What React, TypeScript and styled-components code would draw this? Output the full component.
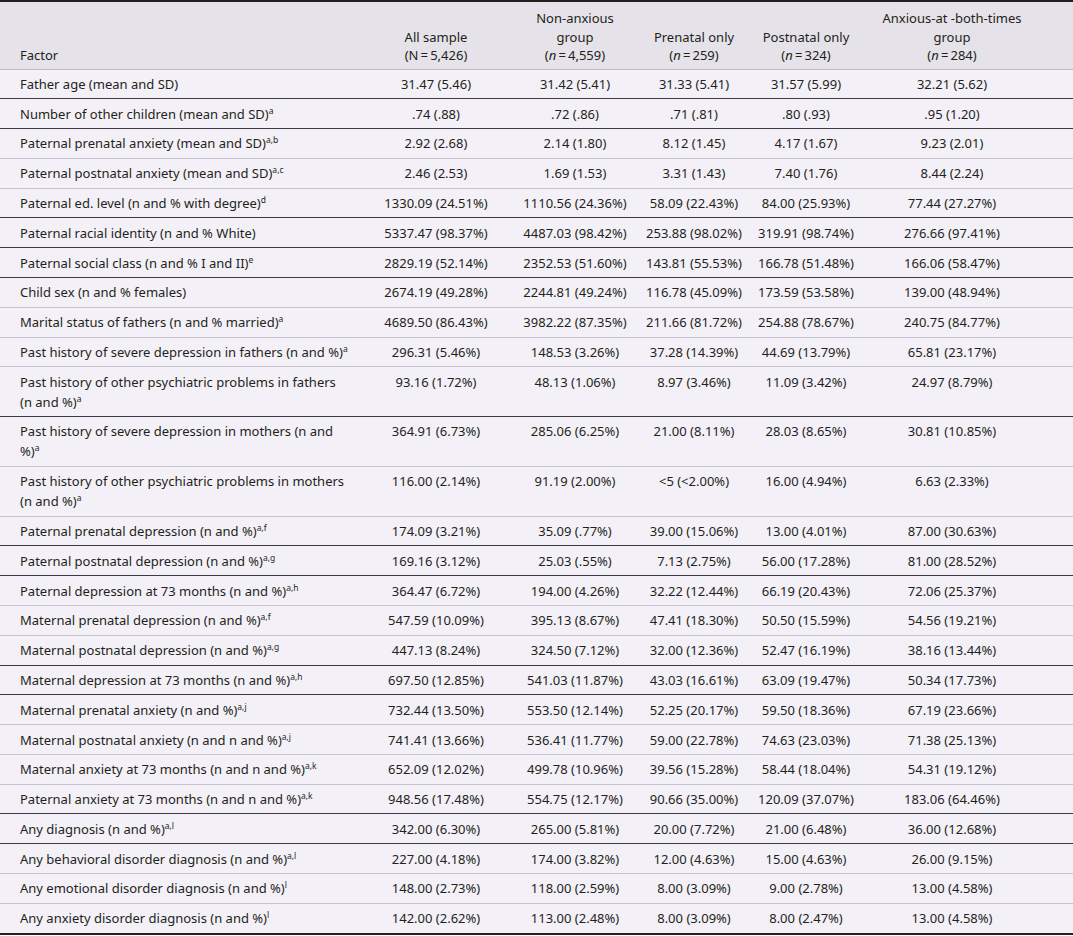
import { Fragment } from "react";
import styled, { createGlobalStyle } from "styled-components";

const Global = createGlobalStyle`
  html, body {
    margin: 0;
    padding: 0;
    background: #ffffff;
  }
`;

const Table = styled.table`
  width: 1073px;
  border-collapse: collapse;
  table-layout: fixed;
  font-family: "Noto Sans", "Open Sans", sans-serif;
  font-size: 13px;
  color: #231f20;
  border-top: 2px solid #231f20;
  border-bottom: 2px solid #231f20;
`;

const Head = styled.thead`
  background: #e5e3e9;
`;

const HeadCell = styled.th<{ $left?: boolean }>`
  font-weight: 400;
  line-height: 18.5px;
  padding: 7px 0 4px;
  vertical-align: bottom;
  text-align: ${(p) => (p.$left ? "left" : "center")};
  border-bottom: 1px solid #bdbbc1;
  white-space: nowrap;
`;

const Body = styled.tbody`
  background: #f3f1f7;
`;

const Row = styled.tr<{ $dark?: boolean }>`
  border-bottom: 1px solid ${(p) => (p.$dark ? "#3d3b40" : "#c6c4ca")};
`;

const Cell = styled.td`
  line-height: 20px;
  padding: 4.4px 0;
  vertical-align: top;
  text-align: center;
  white-space: nowrap;
`;

const FactorCell = styled(Cell)`
  text-align: left;
`;

const Sup = styled.sup`
  font-size: 8.5px;
  line-height: 0;
  vertical-align: 5px;
`;

const Em = styled.i`
  font-style: italic;
`;

/* column widths and side paddings tuned so each column's text sits where it does in the print */
const cols = [
  { w: 378, pl: 20, pr: 6 },
  { w: 128, pl: 0, pr: 12 },
  { w: 130, pl: 8, pr: 0 },
  { w: 116, pl: 0, pr: 0 },
  { w: 118, pl: 0, pr: 10 },
  { w: 203, pl: 0, pr: 39 },
];

const Col = styled.col<{ $w: number }>`
  width: ${(p) => p.$w}px;
`;

type RowData = {
  label: string;
  sup?: string;
  values: string[];
  dark?: boolean;
};

const rows: RowData[] = [
  { label: "Father age (mean and SD)", values: ["31.47 (5.46)", "31.42 (5.41)", "31.33 (5.41)", "31.57 (5.99)", "32.21 (5.62)"], dark: true },
  { label: "Number of other children (mean and SD)", sup: "a", values: [".74 (.88)", ".72 (.86)", ".71 (.81)", ".80 (.93)", ".95 (1.20)"], dark: true },
  { label: "Paternal prenatal anxiety (mean and SD)", sup: "a,b", values: ["2.92 (2.68)", "2.14 (1.80)", "8.12 (1.45)", "4.17 (1.67)", "9.23 (2.01)"] },
  { label: "Paternal postnatal anxiety (mean and SD)", sup: "a,c", values: ["2.46 (2.53)", "1.69 (1.53)", "3.31 (1.43)", "7.40 (1.76)", "8.44 (2.24)"] },
  { label: "Paternal ed. level (n and % with degree)", sup: "d", values: ["1330.09 (24.51%)", "1110.56 (24.36%)", "58.09 (22.43%)", "84.00 (25.93%)", "77.44 (27.27%)"], dark: true },
  { label: "Paternal racial identity (n and % White)", values: ["5337.47 (98.37%)", "4487.03 (98.42%)", "253.88 (98.02%)", "319.91 (98.74%)", "276.66 (97.41%)"], dark: true },
  { label: "Paternal social class (n and % I and II)", sup: "e", values: ["2829.19 (52.14%)", "2352.53 (51.60%)", "143.81 (55.53%)", "166.78 (51.48%)", "166.06 (58.47%)"], dark: true },
  { label: "Child sex (n and % females)", values: ["2674.19 (49.28%)", "2244.81 (49.24%)", "116.78 (45.09%)", "173.59 (53.58%)", "139.00 (48.94%)"] },
  { label: "Marital status of fathers (n and % married)", sup: "a", values: ["4689.50 (86.43%)", "3982.22 (87.35%)", "211.66 (81.72%)", "254.88 (78.67%)", "240.75 (84.77%)"] },
  { label: "Past history of severe depression in fathers (n and %)", sup: "a", values: ["296.31 (5.46%)", "148.53 (3.26%)", "37.28 (14.39%)", "44.69 (13.79%)", "65.81 (23.17%)"] },
  { label: "Past history of other psychiatric problems in fathers\n(n and %)", sup: "a", values: ["93.16 (1.72%)", "48.13 (1.06%)", "8.97 (3.46%)", "11.09 (3.42%)", "24.97 (8.79%)"], dark: true },
  { label: "Past history of severe depression in mothers (n and\n%)", sup: "a", values: ["364.91 (6.73%)", "285.06 (6.25%)", "21.00 (8.11%)", "28.03 (8.65%)", "30.81 (10.85%)"] },
  { label: "Past history of other psychiatric problems in mothers\n(n and %)", sup: "a", values: ["116.00 (2.14%)", "91.19 (2.00%)", "<5 (<2.00%)", "16.00 (4.94%)", "6.63 (2.33%)"] },
  { label: "Paternal prenatal depression (n and %)", sup: "a,f", values: ["174.09 (3.21%)", "35.09 (.77%)", "39.00 (15.06%)", "13.00 (4.01%)", "87.00 (30.63%)"], dark: true },
  { label: "Paternal postnatal depression (n and %)", sup: "a,g", values: ["169.16 (3.12%)", "25.03 (.55%)", "7.13 (2.75%)", "56.00 (17.28%)", "81.00 (28.52%)"], dark: true },
  { label: "Paternal depression at 73 months (n and %)", sup: "a,h", values: ["364.47 (6.72%)", "194.00 (4.26%)", "32.22 (12.44%)", "66.19 (20.43%)", "72.06 (25.37%)"] },
  { label: "Maternal prenatal depression (n and %)", sup: "a,f", values: ["547.59 (10.09%)", "395.13 (8.67%)", "47.41 (18.30%)", "50.50 (15.59%)", "54.56 (19.21%)"] },
  { label: "Maternal postnatal depression (n and %)", sup: "a,g", values: ["447.13 (8.24%)", "324.50 (7.12%)", "32.00 (12.36%)", "52.47 (16.19%)", "38.16 (13.44%)"], dark: true },
  { label: "Maternal depression at 73 months (n and %)", sup: "a,h", values: ["697.50 (12.85%)", "541.03 (11.87%)", "43.03 (16.61%)", "63.09 (19.47%)", "50.34 (17.73%)"], dark: true },
  { label: "Maternal prenatal anxiety (n and %)", sup: "a,j", values: ["732.44 (13.50%)", "553.50 (12.14%)", "52.25 (20.17%)", "59.50 (18.36%)", "67.19 (23.66%)"] },
  { label: "Maternal postnatal anxiety (n and n and %)", sup: "a,j", values: ["741.41 (13.66%)", "536.41 (11.77%)", "59.00 (22.78%)", "74.63 (23.03%)", "71.38 (25.13%)"] },
  { label: "Maternal anxiety at 73 months (n and n and %)", sup: "a,k", values: ["652.09 (12.02%)", "499.78 (10.96%)", "39.56 (15.28%)", "58.44 (18.04%)", "54.31 (19.12%)"] },
  { label: "Paternal anxiety at 73 months (n and n and %)", sup: "a,k", values: ["948.56 (17.48%)", "554.75 (12.17%)", "90.66 (35.00%)", "120.09 (37.07%)", "183.06 (64.46%)"], dark: true },
  { label: "Any diagnosis (n and %)", sup: "a,l", values: ["342.00 (6.30%)", "265.00 (5.81%)", "20.00 (7.72%)", "21.00 (6.48%)", "36.00 (12.68%)"], dark: true },
  { label: "Any behavioral disorder diagnosis (n and %)", sup: "a,l", values: ["227.00 (4.18%)", "174.00 (3.82%)", "12.00 (4.63%)", "15.00 (4.63%)", "26.00 (9.15%)"] },
  { label: "Any emotional disorder diagnosis (n and %)", sup: "l", values: ["148.00 (2.73%)", "118.00 (2.59%)", "8.00 (3.09%)", "9.00 (2.78%)", "13.00 (4.58%)"] },
  { label: "Any anxiety disorder diagnosis (n and %)", sup: "l", values: ["142.00 (2.62%)", "113.00 (2.48%)", "8.00 (3.09%)", "8.00 (2.47%)", "13.00 (4.58%)"] },
];

const pad = (i: number) => ({ paddingLeft: cols[i].pl, paddingRight: cols[i].pr });

const Label = ({ text }: { text: string }) => (
  <>
    {text.split("\n").map((line, i) => (
      <Fragment key={i}>
        {i > 0 && <br />}
        {line}
      </Fragment>
    ))}
  </>
);

export default function App() {
  return (
    <>
      <Global />
      <Table>
        <colgroup>
          {cols.map((c, i) => (
            <Col key={i} $w={c.w} />
          ))}
        </colgroup>
        <Head>
          <tr>
            <HeadCell $left style={pad(0)}>Factor</HeadCell>
            <HeadCell style={pad(1)}>
              All sample
              <br />
              (N&#8201;=&#8201;5,426)
            </HeadCell>
            <HeadCell style={pad(2)}>
              Non-anxious
              <br />
              group
              <br />
              (<Em>n</Em>&#8201;=&#8201;4,559)
            </HeadCell>
            <HeadCell style={pad(3)}>
              Prenatal only
              <br />
              (<Em>n</Em>&#8201;=&#8201;259)
            </HeadCell>
            <HeadCell style={pad(4)}>
              Postnatal only
              <br />
              (<Em>n</Em>&#8201;=&#8201;324)
            </HeadCell>
            <HeadCell style={pad(5)}>
              Anxious-at -both-times
              <br />
              group
              <br />
              (<Em>n</Em>&#8201;=&#8201;284)
            </HeadCell>
          </tr>
        </Head>
        <Body>
          {rows.map((r, i) => (
            <Row key={i} $dark={r.dark}>
              <FactorCell style={pad(0)}>
                <Label text={r.label} />
                {r.sup && <Sup>{r.sup}</Sup>}
              </FactorCell>
              {r.values.map((v, j) => (
                <Cell key={j} style={pad(j + 1)}>
                  {v}
                </Cell>
              ))}
            </Row>
          ))}
        </Body>
      </Table>
    </>
  );
}
